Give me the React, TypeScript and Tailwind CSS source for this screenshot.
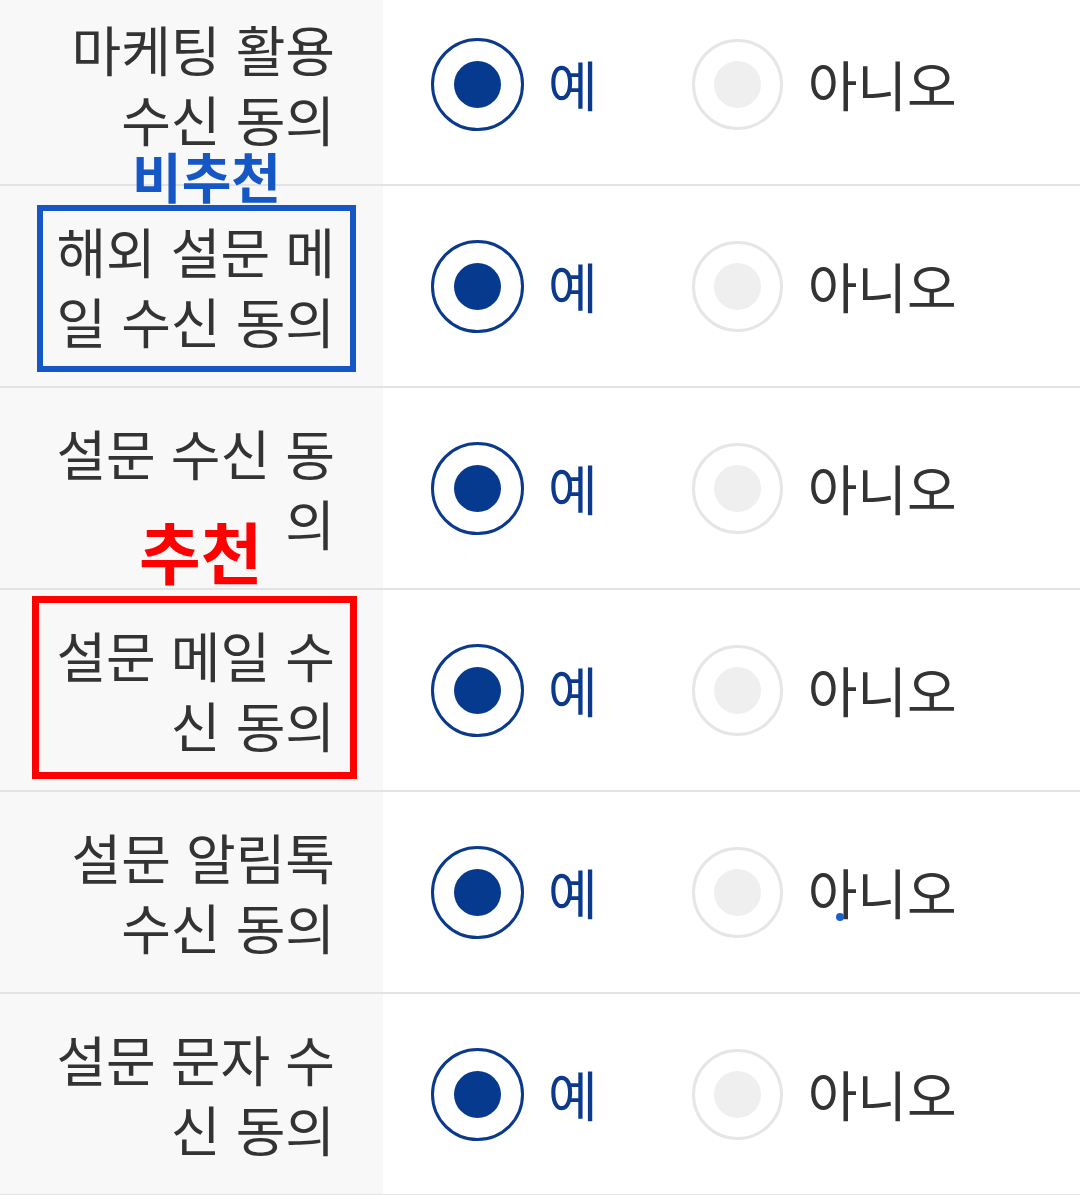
import React from "react";

const rows: string[] = [
  "마케팅 활용 수신 동의",
  "해외 설문 메일 수신 동의",
  "설문 수신 동의",
  "설문 메일 수신 동의",
  "설문 알림톡 수신 동의",
  "설문 문자 수신 동의",
];

const font = { fontFamily: '"Noto Sans CJK KR", "Noto Sans", sans-serif' };

function Row({ label }: { label: string }) {
  return (
    <div className="flex h-[202px] border-b-2 border-[#e3e3e3]">
      <div className="w-[383px] shrink-0 bg-[#f8f8f8] flex items-center justify-end pr-[48px]">
        <div className="w-[300px] text-right text-[54px] leading-[70px] text-[#333333] [word-spacing:3px]">
          {label}
        </div>
      </div>
      <div className="flex items-center pl-[48px]">
        <div className="flex items-center gap-[24px]">
          <div className="w-[93px] h-[93px] rounded-full border-[3px] border-[#0b3a8c] flex items-center justify-center">
            <div className="w-[47px] h-[47px] rounded-full bg-[#053a8f]" />
          </div>
          <span className="text-[54px] leading-none text-[#0b3a8c]">예</span>
        </div>
        <div className="flex items-center gap-[25px] ml-[94px]">
          <div className="w-[91px] h-[91px] rounded-full border-[3px] border-[#e6e6e6] flex items-center justify-center">
            <div className="w-[47px] h-[47px] rounded-full bg-[#efefef]" />
          </div>
          <span className="text-[54px] leading-none text-[#333333]">아니오</span>
        </div>
      </div>
    </div>
  );
}

export default function App() {
  return (
    <div className="relative w-[1080px] h-[1195px] overflow-hidden bg-white" style={font}>
      <div className="-mt-[16px]">
        {rows.map((r) => (
          <Row key={r} label={r} />
        ))}
      </div>
      <div className="absolute left-[132px] top-[149px] text-[54px] leading-none font-bold text-[#1558c5]">
        비추천
      </div>
      <div className="absolute left-[37px] top-[205px] w-[319px] h-[167px] border-[6px] border-[#1558c5]" />
      <div className="absolute left-[139px] top-[516px] text-[67px] leading-none font-bold text-[#ff0000]">
        추천
      </div>
      <div className="absolute left-[32px] top-[596px] w-[325px] h-[183px] border-[7px] border-[#ff0000]" />
      <div className="absolute left-[836px] top-[913px] w-[8px] h-[8px] rounded-full bg-[#1a5fd0]" />
    </div>
  );
}
